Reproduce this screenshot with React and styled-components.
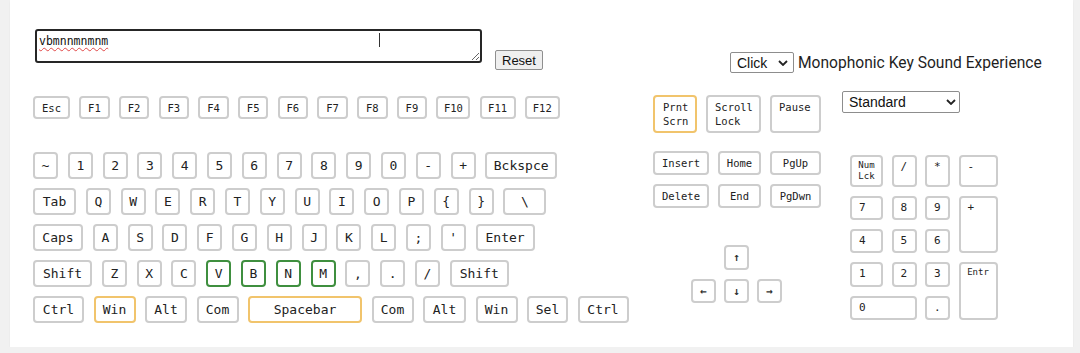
import React from "react";
import styled, { createGlobalStyle, css } from "styled-components";

const GlobalStyle = createGlobalStyle`
  html, body {
    margin: 0;
    padding: 0;
    background: #f1f1f1;
  }
  body {
    font-family: "Liberation Sans", Arial, sans-serif;
  }
`;

const MONO = `"DejaVu Sans Mono", "Liberation Mono", monospace`;

const fnKeys = [
  ["Esc", 37], ["F1", 30.5], ["F2", 30.5], ["F3", 30.5], ["F4", 30.5],
  ["F5", 30.5], ["F6", 30.5], ["F7", 30.5], ["F8", 30.5], ["F9", 30.5],
  ["F10", 34], ["F11", 36], ["F12", 35],
];

const single = (chars, tone) => chars.split("").map((c) => [c, 25, tone]);

const mainRows = [
  { gap: 9.8, keys: [...single("~1234567890-+"), ["Bckspce", 71.6]] },
  { gap: 9.8, keys: [["Tab", 43], ...single("QWERTYUIOP{}"), ["\\", 43]] },
  { gap: 9.8, keys: [["Caps", 50], ...single("ASDFGHJKL;'"), ["Enter", 59]] },
  {
    gap: 9.8,
    keys: [
      ["Shift", 59], ...single("ZXC"), ...single("VBNM", "green"),
      ...single(",./"), ["Shift", 59],
    ],
  },
  {
    gap: 9.5,
    keys: [
      ["Ctrl", 51], ["Win", 42, "orange"], ["Alt", 42], ["Com", 42],
      ["Spacebar", 114, "orange"], ["Com", 42], ["Alt", 43], ["Win", 42],
      ["Sel", 41], ["Ctrl", 51],
    ],
  },
];

const numpadKeys = [
  { label: "Num\nLck", small: true },
  { label: "/" }, { label: "*" }, { label: "-" },
  { label: "7" }, { label: "8" }, { label: "9" }, { label: "+", rows: 2 },
  { label: "4" }, { label: "5" }, { label: "6" },
  { label: "1" }, { label: "2" }, { label: "3" }, { label: "Entr", rows: 2, small: true },
  { label: "0", cols: 2 }, { label: "." },
];

const borderFor = (tone) =>
  tone === "orange" ? "#f1c46c" : tone === "green" ? "#3f8f3f" : "#cdcdcd";

const Panel = styled.div`
  margin-left: 10px;
  width: 1063px;
  height: 347px;
  background: #ffffff;
  box-sizing: border-box;
  padding: 29px 0 0 23px;
  box-shadow: 0 1px 2px rgba(0, 0, 0, 0.05);
`;

const TopRow = styled.div`
  display: flex;
  align-items: flex-start;
  height: 62px;
`;

const TextBox = styled.div`
  position: relative;
  margin-left: 2px;
  height: 34px;
`;

const TypedArea = styled.textarea`
  display: block;
  box-sizing: border-box;
  width: 447px;
  height: 34px;
  margin: 0;
  padding: 3px 2px;
  border: 2px solid #262626;
  border-radius: 3px;
  outline: none;
  font-family: ${MONO};
  font-size: 11.5px;
  line-height: 14px;
  color: #111;
  text-decoration: underline wavy #e04848;
  text-decoration-thickness: 1px;
  text-underline-offset: 2px;
`;

const Caret = styled.span`
  position: absolute;
  left: 344px;
  top: 4px;
  width: 1px;
  height: 14px;
  background: #333;
`;

const ResetButton = styled.button`
  margin: 21px 0 0 13px;
  height: 20px;
  padding: 0 6px;
  font-family: "Liberation Sans", Arial, sans-serif;
  font-size: 13px;
  color: #111;
  background: #efefef;
  border: 1px solid #8f8f8f;
  border-radius: 2px;
`;

const SoundGroup = styled.div`
  margin: 23px 0 0 187px;
  display: flex;
  align-items: center;
  gap: 4px;
`;

const SelectBox = styled.div`
  position: relative;
  width: ${(p) => p.$w}px;
  height: ${(p) => p.$h}px;
`;

const Select = styled.select`
  appearance: none;
  box-sizing: border-box;
  width: 100%;
  height: 100%;
  margin: 0;
  padding: 0 0 0 6px;
  border: 1px solid #8d8d8d;
  border-radius: 2px;
  background: #fff;
  font-family: "Liberation Sans", Arial, sans-serif;
  font-size: 14px;
  color: #111;
`;

const Chevron = styled.svg`
  position: absolute;
  right: ${(p) => p.$right}px;
  top: 50%;
  margin-top: -3px;
  pointer-events: none;
`;

const SoundLabel = styled.span`
  font-family: Roboto, "Liberation Sans", sans-serif;
  font-size: 15.6px;
  color: #1e1e1e;
`;

const KeyboardRow = styled.div`
  display: flex;
  align-items: flex-start;
`;

const MainBlock = styled.div`
  width: 596px;
  flex: none;
  padding-top: 5px;
  display: flex;
  flex-direction: column;
`;

const KeyRow = styled.div`
  display: flex;
  gap: ${(p) => p.$gap}px;
`;

const MainRows = styled.div`
  margin-top: 33px;
  display: flex;
  flex-direction: column;
  gap: 9px;
`;

const Key = styled.div`
  box-sizing: border-box;
  flex: none;
  width: ${(p) => p.$w}px;
  height: ${(p) => p.$h}px;
  border: 2px solid ${(p) => borderFor(p.$tone)};
  border-radius: 4px;
  background: #fff;
  display: flex;
  align-items: center;
  justify-content: center;
  text-align: center;
  font-family: ${MONO};
  font-size: ${(p) => p.$size}px;
  color: #222;
  white-space: pre-line;
  ${(p) =>
    p.$top &&
    css`
      display: block;
      text-align: left;
      padding: 3px 0 0 ${p.$pad}px;
      line-height: 14px;
    `}
`;

const NavBlock = styled.div`
  margin-left: 24px;
  width: 168px;
  flex: none;
  padding-top: 4px;
  display: flex;
  flex-direction: column;
`;

const NavGroup = styled.div`
  margin-top: 18px;
  display: flex;
  flex-direction: column;
  gap: 9px;
`;

const ArrowGrid = styled.div`
  margin: 37px 0 0 38px;
  display: grid;
  grid-template-columns: repeat(3, 25px);
  grid-template-rows: 25px 24px;
  gap: 9px 8px;
`;

const ArrowKey = styled(Key)`
  width: auto;
  height: auto;
  grid-column: ${(p) => p.$col};
  font-size: 11px;
  font-weight: 700;
  color: #333;
`;

const NumBlock = styled.div`
  margin-left: 21px;
  display: flex;
  flex-direction: column;
`;

const NumGrid = styled.div`
  margin: 42px 0 0 8px;
  display: grid;
  grid-template-columns: 33px 25px 25px 39px;
  grid-template-rows: 32px 24px 24px 25px 24px;
  gap: 9px 8.5px;
`;

const NumKey = styled.div`
  box-sizing: border-box;
  grid-row: span ${(p) => p.$rows || 1};
  grid-column: span ${(p) => p.$cols || 1};
  border: 2px solid #cdcdcd;
  border-radius: 4px;
  background: #fff;
  padding: ${(p) => (p.$small ? "3px 0 0 0" : "3px 0 0 7px")};
  text-align: ${(p) => (p.$small ? "center" : "left")};
  font-family: ${MONO};
  font-size: ${(p) => (p.$small ? 9 : 11)}px;
  line-height: ${(p) => (p.$small ? 11 : 14)}px;
  color: #222;
  white-space: pre-line;
`;

const ChevronIcon = ({ right }) => (
  <Chevron $right={right} width="10" height="6" viewBox="0 0 10 6">
    <path d="M1 1l4 4 4-4" fill="none" stroke="#222" strokeWidth="1.8" />
  </Chevron>
);

const App = () => {
  return (
    <>
      <GlobalStyle />
      <Panel>
        <TopRow>
          <TextBox>
            <TypedArea defaultValue="vbmnnmnmnm" spellCheck={false} />
            <Caret />
          </TextBox>
          <ResetButton>Reset</ResetButton>
          <SoundGroup>
            <SelectBox $w={64} $h={21}>
              <Select defaultValue="click">
                <option value="click">Click</option>
                <option value="tap">Tap</option>
              </Select>
              <ChevronIcon right={6} />
            </SelectBox>
            <SoundLabel>Monophonic Key Sound Experience</SoundLabel>
          </SoundGroup>
        </TopRow>

        <KeyboardRow>
          <MainBlock>
            <KeyRow $gap={9.2}>
              {fnKeys.map(([label, w]) => (
                <Key key={label} $w={w} $h={23} $size={10.5}>
                  {label}
                </Key>
              ))}
            </KeyRow>
            <MainRows>
              {mainRows.map((row, i) => (
                <KeyRow key={i} $gap={row.gap}>
                  {row.keys.map(([label, w, tone], j) => (
                    <Key key={j} $w={w} $h={27} $size={13} $tone={tone}>
                      {label}
                    </Key>
                  ))}
                </KeyRow>
              ))}
            </MainRows>
          </MainBlock>

          <NavBlock>
            <KeyRow $gap={9}>
              <Key $w={44} $h={38} $size={10.5} $top $pad={8} $tone="orange">
                {"Prnt\nScrn"}
              </Key>
              <Key $w={55} $h={38} $size={10.5} $top $pad={7}>
                {"Scroll\nLock"}
              </Key>
              <Key $w={51} $h={38} $size={10.5} $top $pad={7}>
                Pause
              </Key>
            </KeyRow>
            <NavGroup>
              <KeyRow $gap={9}>
                <Key $w={56} $h={24} $size={10.5}>Insert</Key>
                <Key $w={43} $h={24} $size={10.5}>Home</Key>
                <Key $w={51} $h={24} $size={10.5}>PgUp</Key>
              </KeyRow>
              <KeyRow $gap={9}>
                <Key $w={56} $h={24} $size={10.5}>Delete</Key>
                <Key $w={43} $h={24} $size={10.5}>End</Key>
                <Key $w={51} $h={24} $size={10.5}>PgDwn</Key>
              </KeyRow>
            </NavGroup>
            <ArrowGrid>
              <ArrowKey $col={2}>↑</ArrowKey>
              <ArrowKey $col={1}>←</ArrowKey>
              <ArrowKey $col={2}>↓</ArrowKey>
              <ArrowKey $col={3}>→</ArrowKey>
            </ArrowGrid>
          </NavBlock>

          <NumBlock>
            <SelectBox $w={118} $h={22}>
              <Select defaultValue="standard">
                <option value="standard">Standard</option>
                <option value="compact">Compact</option>
              </Select>
              <ChevronIcon right={4} />
            </SelectBox>
            <NumGrid>
              {numpadKeys.map((k, i) => (
                <NumKey key={i} $rows={k.rows} $cols={k.cols} $small={k.small}>
                  {k.label}
                </NumKey>
              ))}
            </NumGrid>
          </NumBlock>
        </KeyboardRow>
      </Panel>
    </>
  );
};

export default App;
